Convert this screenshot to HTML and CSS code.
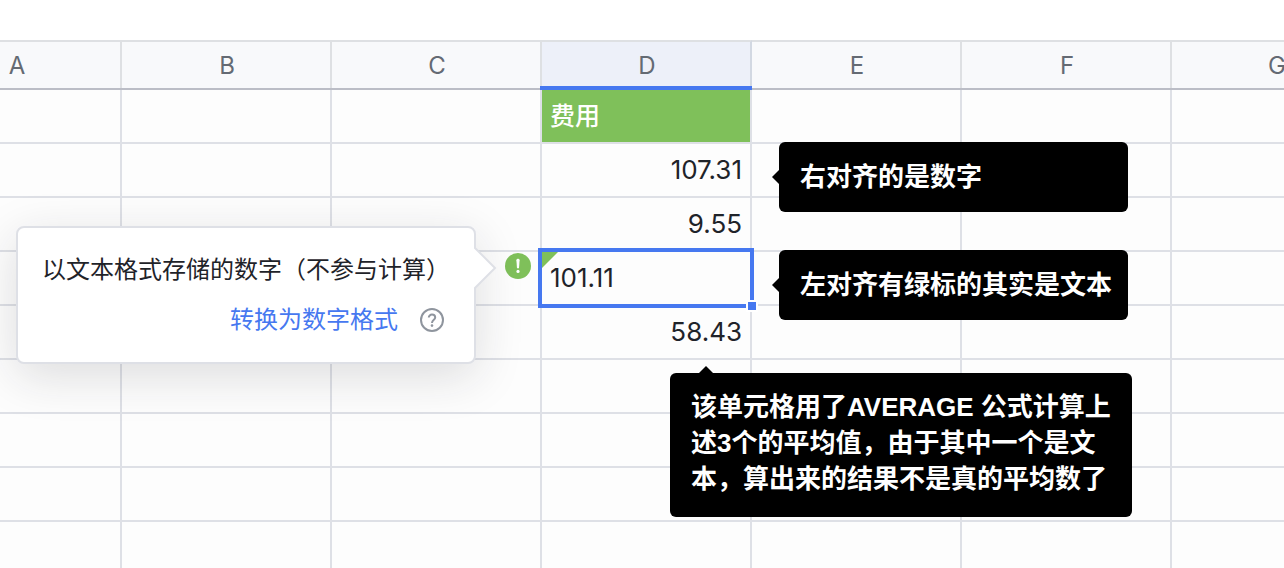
FILE: index.html
```html
<!DOCTYPE html>
<html lang="zh-CN">
<head>
<meta charset="utf-8">
<meta name="viewport" content="width=device-width, initial-scale=1">
<title>费用</title>
<link rel="stylesheet" href="styles.css">
</head>
<body>
<main class="sheet">
  <table class="grid">
    <thead>
      <tr><th scope="col">A</th><th scope="col">B</th><th scope="col">C</th><th scope="col" class="active">D</th><th scope="col">E</th><th scope="col">F</th><th scope="col">G</th></tr>
    </thead>
    <tbody>
      <tr><td></td><td></td><td></td><td class="title">费用</td><td></td><td></td><td></td></tr>
      <tr><td></td><td></td><td></td>
        <td class="number">107.31<div class="note note-side">右对齐的是数字</div></td>
        <td></td><td></td><td></td></tr>
      <tr><td></td><td></td><td></td><td class="number">9.55</td><td></td><td></td><td></td></tr>
      <tr><td></td><td></td><td></td>
        <td class="selected">101.11
          <span class="handle"></span>
          <button class="warning" type="button" aria-label="数字格式提示">
            <svg viewBox="0 0 26 26" width="26" height="26" aria-hidden="true">
              <circle cx="13" cy="13" r="13" fill="#7fc05a"/>
              <path d="M11.4 7.2Q11.4 5.8 13 5.8T14.6 7.2L14 15.2H12z" fill="#fff"/>
              <circle cx="13" cy="18.4" r="1.6" fill="#fff"/>
            </svg>
          </button>
          <div class="popover" role="dialog" aria-label="数字格式提示">
            <svg class="popover-arrow" viewBox="0 0 24 42" width="24" height="42" aria-hidden="true">
              <path d="M0 0H1V1L21 21L1 41V42H0z" fill="#fff"/>
              <path d="M1 0V1L21 21L1 41V42" fill="none" stroke="#dee0e6" stroke-width="2"/>
            </svg>
            <p class="popover-text">以文本格式存储的数字（不参与计算）</p>
            <div class="popover-actions">
              <a class="convert" href="#">转换为数字格式</a>
              <button class="help" type="button" aria-label="帮助">
                <svg viewBox="0 0 24 24" width="24" height="24" fill="none" stroke="#8f959e" stroke-width="2" aria-hidden="true">
                  <circle cx="12" cy="12" r="11"/>
                  <path d="M8.8 9.6C8.8 7.7 10.2 6.6 12 6.6S15.2 7.8 15.2 9.5C15.2 11.7 12 11.9 12 15"/>
                  <circle cx="12" cy="17.6" r="1.3" fill="#8f959e" stroke="none"/>
                </svg>
              </button>
            </div>
          </div>
          <div class="note note-side">左对齐有绿标的其实是文本</div>
        </td>
        <td></td><td></td><td></td></tr>
      <tr><td></td><td></td><td></td>
        <td class="number">58.43<div class="note note-below">该单元格用了AVERAGE 公式计算上述3个的平均值，由于其中一个是文本，算出来的结果不是真的平均数了</div></td>
        <td></td><td></td><td></td></tr>
      <tr><td></td><td></td><td></td><td></td><td></td><td></td><td></td></tr>
      <tr><td></td><td></td><td></td><td></td><td></td><td></td><td></td></tr>
      <tr><td></td><td></td><td></td><td></td><td></td><td></td><td></td></tr>
      <tr><td></td><td></td><td></td><td></td><td></td><td></td><td></td></tr>
    </tbody>
  </table>
</main>
</body>
</html>
```
FILE: styles.css
```css
* {
  box-sizing: border-box;
}

body {
  margin: 0;
  background: #fff;
  color: #1f2329;
  font-family: Inter, "Noto Sans CJK SC", sans-serif;
}

.sheet {
  height: 100vh;
  padding-top: 40px;
  overflow: hidden;
}

/* The sheet is scrolled partway into column A. */
.grid {
  width: 1470px;
  margin-left: -88px;
  table-layout: fixed;
  border-collapse: separate;
  border-spacing: 0;
}

.grid th {
  position: relative;
  height: 50px;
  padding: 2px 0 0 2px;
  border: solid #dee0e3;
  border-width: 2px 2px 2px 0;
  background: #f8f9fb;
  color: #646a73;
  font-size: 24px;
  font-weight: 400;
  line-height: 32px;
}

.grid th::after {
  content: "";
  position: absolute;
  right: -2px;
  bottom: -2px;
  left: 0;
  height: 2px;
  background: #bbbdc6;
}

.grid th.active {
  z-index: 1;
  background: #edf0f9;
  border-right-color: #d2d8e2;
}

.grid th.active::after {
  left: -2px;
  height: 4px;
  background: #4678f0;
}

.grid td {
  position: relative;
  height: 54px;
  padding: 0 8px;
  border: solid #dee0e6;
  border-width: 0 2px 2px 0;
  background: #fdfdfd;
  font-size: 26px;
  line-height: 36px;
}

.grid td:empty {
  position: static;
}

.grid td.title {
  background: #7fc05a;
  color: #fff;
  font-size: 25px;
  font-weight: 500;
}

.grid td.number {
  text-align: right;
}

.grid td.selected {
  z-index: 1;
}

.selected::before {
  content: "";
  position: absolute;
  inset: -4px;
  border: 4px solid #4678f0;
}

.selected::after {
  content: "";
  position: absolute;
  top: 0;
  left: 0;
  border: solid transparent;
  border-width: 0 16px 16px 0;
  border-top: 16px solid #7fc05a;
  border-bottom: 0;
}

.handle {
  position: absolute;
  right: -8px;
  bottom: -8px;
  width: 12px;
  height: 12px;
  border: 2px solid #fff;
  background: #4678f0;
}

.warning,
.help {
  display: block;
  padding: 0;
  border: 0;
  background: none;
  cursor: pointer;
}

.warning svg,
.help svg {
  display: block;
}

.warning {
  position: absolute;
  top: 1px;
  right: calc(100% + 11px);
}

.popover {
  position: absolute;
  top: -26px;
  right: calc(100% + 66px);
  width: 460px;
  padding: 24px;
  border: 2px solid #dee0e6;
  border-radius: 8px;
  background: #fff;
  box-shadow: 0 12px 48px rgba(31, 35, 41, 0.15);
  font-size: 24px;
  white-space: nowrap;
}

.popover-arrow {
  position: absolute;
  top: 19px;
  left: 100%;
}

.popover-text {
  margin: 0;
}

.popover-actions {
  display: flex;
  align-items: center;
  justify-content: flex-end;
  gap: 22px;
  margin-top: 14px;
  padding-right: 6px;
}

.convert {
  color: #4678f0;
  text-decoration: none;
}

.note {
  position: absolute;
  z-index: 1;
  padding: 16px 21px;
  border-radius: 6px;
  background: #000;
  color: #fff;
  font-family: "Liberation Sans", "Noto Sans CJK SC", sans-serif;
  font-size: 26px;
  font-weight: 700;
  line-height: 36px;
  text-align: left;
}

.note::before {
  content: "";
  position: absolute;
  border: 7px solid transparent;
}

.note-side {
  top: -2px;
  left: calc(100% + 29px);
  width: 349px;
  padding-block: 17px;
  white-space: nowrap;
}

.note-side::before {
  top: 28px;
  right: 100%;
  border-right-color: #000;
  border-left: 0;
}

.note-below {
  top: calc(100% + 15px);
  left: 128px;
  width: 462px;
  padding-bottom: 20px;
}

.note-below::before {
  bottom: 100%;
  left: 29px;
  border-top: 0;
  border-bottom-color: #000;
}
```
